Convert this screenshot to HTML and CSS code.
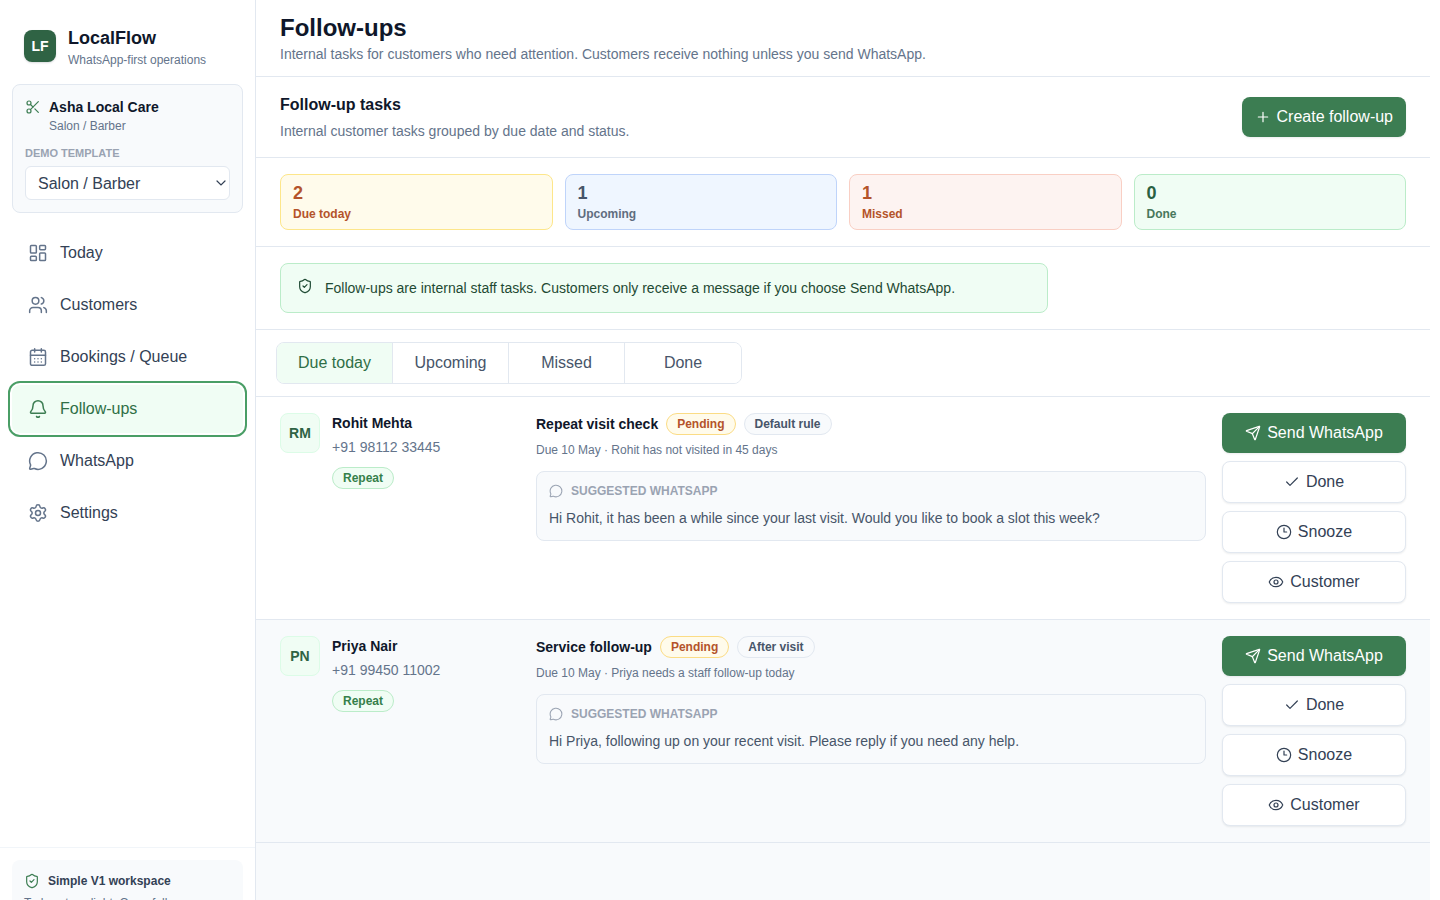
FILE: index.html
```html
<!DOCTYPE html>
<html lang="en">
<head>
  <meta charset="UTF-8">
  <title>LocalFlow - Follow-ups</title>
  <meta name="viewport" content="width=device-width, initial-scale=1.0">
  <link rel="stylesheet" href="styles.css">
</head>
<body>
  <svg class="sprite" aria-hidden="true">
    <symbol id="i-scissors" viewBox="0 0 24 24"><circle cx="6" cy="6" r="3"/><path d="M8.12 8.12 12 12"/><path d="M20 4 8.12 15.88"/><circle cx="6" cy="18" r="3"/><path d="M14.8 14.8 20 20"/></symbol>
    <symbol id="i-dashboard" viewBox="0 0 24 24"><rect width="7" height="9" x="3" y="3" rx="1"/><rect width="7" height="5" x="14" y="3" rx="1"/><rect width="7" height="9" x="14" y="12" rx="1"/><rect width="7" height="5" x="3" y="16" rx="1"/></symbol>
    <symbol id="i-users" viewBox="0 0 24 24"><path d="M16 21v-2a4 4 0 0 0-4-4H6a4 4 0 0 0-4 4v2"/><circle cx="9" cy="7" r="4"/><path d="M22 21v-2a4 4 0 0 0-3-3.87"/><path d="M16 3.13a4 4 0 0 1 0 7.75"/></symbol>
    <symbol id="i-calendar" viewBox="0 0 24 24"><path d="M8 2v4M16 2v4"/><rect width="18" height="18" x="3" y="4" rx="2"/><path d="M3 10h18M8 14h.01M12 14h.01M16 14h.01M8 18h.01M12 18h.01M16 18h.01"/></symbol>
    <symbol id="i-bell" viewBox="0 0 24 24"><path d="M10.268 21a2 2 0 0 0 3.464 0"/><path d="M3.262 15.326A1 1 0 0 0 4 17h16a1 1 0 0 0 .74-1.673C19.41 13.956 18 12.499 18 8A6 6 0 0 0 6 8c0 4.499-1.411 5.956-2.738 7.326"/></symbol>
    <symbol id="i-chat" viewBox="0 0 24 24"><path d="M2.992 16.342a2 2 0 0 1 .094 1.167l-1.065 3.29a1 1 0 0 0 1.236 1.168l3.413-.998a2 2 0 0 1 1.099.092 10 10 0 1 0-4.777-4.719"/></symbol>
    <symbol id="i-settings" viewBox="0 0 24 24"><path d="M9.671 4.136a2.34 2.34 0 0 1 4.659 0 2.34 2.34 0 0 0 3.319 1.915 2.34 2.34 0 0 1 2.33 4.033 2.34 2.34 0 0 0 0 3.831 2.34 2.34 0 0 1-2.33 4.033 2.34 2.34 0 0 0-3.319 1.915 2.34 2.34 0 0 1-4.659 0 2.34 2.34 0 0 0-3.32-1.915 2.34 2.34 0 0 1-2.33-4.033 2.34 2.34 0 0 0 0-3.831A2.34 2.34 0 0 1 6.35 6.051a2.34 2.34 0 0 0 3.319-1.915"/><circle cx="12" cy="12" r="3"/></symbol>
    <symbol id="i-shield" viewBox="0 0 24 24"><path d="M20 13c0 5-3.5 7.5-7.66 8.95a1 1 0 0 1-.67-.01C7.5 20.5 4 18 4 13V6a1 1 0 0 1 1-1c2 0 4.5-1.2 6.24-2.72a1.17 1.17 0 0 1 1.52 0C14.51 3.81 17 5 19 5a1 1 0 0 1 1 1z"/><path d="m9 12 2 2 4-4"/></symbol>
    <symbol id="i-plus" viewBox="0 0 24 24"><path d="M5 12h14M12 5v14"/></symbol>
    <symbol id="i-send" viewBox="0 0 24 24"><path d="M14.536 21.686a.5.5 0 0 0 .937-.024l6.5-19a.496.496 0 0 0-.635-.635l-19 6.5a.5.5 0 0 0-.024.937l7.93 3.18a2 2 0 0 1 1.112 1.11z"/><path d="m21.854 2.147-10.94 10.939"/></symbol>
    <symbol id="i-check" viewBox="0 0 24 24"><path d="M20 6 9 17l-5-5"/></symbol>
    <symbol id="i-clock" viewBox="0 0 24 24"><circle cx="12" cy="12" r="10"/><path d="M12 6v6h4"/></symbol>
    <symbol id="i-eye" viewBox="0 0 24 24"><path d="M2.062 12.348a1 1 0 0 1 0-.696 10.75 10.75 0 0 1 19.876 0 1 1 0 0 1 0 .696 10.75 10.75 0 0 1-19.876 0"/><circle cx="12" cy="12" r="3"/></symbol>
  </svg>

  <div class="app">
    <aside class="sidebar">
      <div class="brand">
        <div class="brand-mark">LF</div>
        <div>
          <div class="brand-name">LocalFlow</div>
          <div class="brand-sub">WhatsApp-first operations</div>
        </div>
      </div>

      <div class="business">
        <div class="business-head">
          <svg class="icon"><use href="#i-scissors"/></svg>
          <div>
            <div class="business-name">Asha Local Care</div>
            <div class="business-type">Salon / Barber</div>
          </div>
        </div>
        <label class="field-label" for="template">Demo template</label>
        <select class="field-select" id="template">
          <option>Salon / Barber</option>
        </select>
      </div>

      <nav class="nav">
        <a class="nav-item" href="#today"><svg class="icon"><use href="#i-dashboard"/></svg>Today</a>
        <a class="nav-item" href="#customers"><svg class="icon"><use href="#i-users"/></svg>Customers</a>
        <a class="nav-item" href="#bookings"><svg class="icon"><use href="#i-calendar"/></svg>Bookings / Queue</a>
        <a class="nav-item active" href="#follow-ups" aria-current="page"><svg class="icon"><use href="#i-bell"/></svg>Follow-ups</a>
        <a class="nav-item" href="#whatsapp"><svg class="icon"><use href="#i-chat"/></svg>WhatsApp</a>
        <a class="nav-item" href="#settings"><svg class="icon"><use href="#i-settings"/></svg>Settings</a>
      </nav>

      <div class="sidebar-foot">
        <div class="workspace">
          <div class="workspace-title"><svg class="icon"><use href="#i-shield"/></svg>Simple V1 workspace</div>
          <p class="workspace-text">Today stays light. Open full workspaces only when needed.</p>
        </div>
      </div>
    </aside>

    <main class="main">
      <header class="page-head">
        <h1>Follow-ups</h1>
        <p>Internal tasks for customers who need attention. Customers receive nothing unless you send WhatsApp.</p>
      </header>

      <section class="band toolbar">
        <div>
          <h2>Follow-up tasks</h2>
          <p>Internal customer tasks grouped by due date and status.</p>
        </div>
        <button class="btn btn-primary" type="button"><svg class="icon"><use href="#i-plus"/></svg>Create follow-up</button>
      </section>

      <section class="band stats">
        <div class="stat stat-today"><strong>2</strong><span>Due today</span></div>
        <div class="stat stat-upcoming"><strong>1</strong><span>Upcoming</span></div>
        <div class="stat stat-missed"><strong>1</strong><span>Missed</span></div>
        <div class="stat stat-done"><strong>0</strong><span>Done</span></div>
      </section>

      <section class="band">
        <div class="notice">
          <svg class="icon"><use href="#i-shield"/></svg>
          <p>Follow-ups are internal staff tasks. Customers only receive a message if you choose Send WhatsApp.</p>
        </div>
      </section>

      <section class="band tab-band">
        <div class="tabs">
          <button class="tab active" type="button">Due today</button>
          <button class="tab" type="button">Upcoming</button>
          <button class="tab" type="button">Missed</button>
          <button class="tab" type="button">Done</button>
        </div>
      </section>

      <article class="band task">
        <div class="person">
          <div class="avatar">RM</div>
          <div>
            <h3>Rohit Mehta</h3>
            <p class="phone">+91 98112 33445</p>
            <span class="badge badge-green">Repeat</span>
          </div>
        </div>
        <div class="detail">
          <div class="detail-head">
            <h3>Repeat visit check</h3>
            <span class="badge badge-amber">Pending</span>
            <span class="badge">Default rule</span>
          </div>
          <p class="due">Due 10 May · Rohit has not visited in 45 days</p>
          <div class="suggest">
            <div class="suggest-label"><svg class="icon"><use href="#i-chat"/></svg>Suggested WhatsApp</div>
            <p>Hi Rohit, it has been a while since your last visit. Would you like to book a slot this week?</p>
          </div>
        </div>
        <div class="actions">
          <button class="btn btn-primary" type="button"><svg class="icon"><use href="#i-send"/></svg>Send WhatsApp</button>
          <button class="btn btn-plain" type="button"><svg class="icon"><use href="#i-check"/></svg>Done</button>
          <button class="btn btn-plain" type="button"><svg class="icon"><use href="#i-clock"/></svg>Snooze</button>
          <button class="btn btn-plain" type="button"><svg class="icon"><use href="#i-eye"/></svg>Customer</button>
        </div>
      </article>

      <article class="band task task-alt">
        <div class="person">
          <div class="avatar">PN</div>
          <div>
            <h3>Priya Nair</h3>
            <p class="phone">+91 99450 11002</p>
            <span class="badge badge-green">Repeat</span>
          </div>
        </div>
        <div class="detail">
          <div class="detail-head">
            <h3>Service follow-up</h3>
            <span class="badge badge-amber">Pending</span>
            <span class="badge">After visit</span>
          </div>
          <p class="due">Due 10 May · Priya needs a staff follow-up today</p>
          <div class="suggest">
            <div class="suggest-label"><svg class="icon"><use href="#i-chat"/></svg>Suggested WhatsApp</div>
            <p>Hi Priya, following up on your recent visit. Please reply if you need any help.</p>
          </div>
        </div>
        <div class="actions">
          <button class="btn btn-primary" type="button"><svg class="icon"><use href="#i-send"/></svg>Send WhatsApp</button>
          <button class="btn btn-plain" type="button"><svg class="icon"><use href="#i-check"/></svg>Done</button>
          <button class="btn btn-plain" type="button"><svg class="icon"><use href="#i-clock"/></svg>Snooze</button>
          <button class="btn btn-plain" type="button"><svg class="icon"><use href="#i-eye"/></svg>Customer</button>
        </div>
      </article>
    </main>
  </div>
</body>
</html>
```
FILE: styles.css
```css
* {
  box-sizing: border-box;
}

body {
  margin: 0;
  background: #fff;
  color: #0f172a;
  font-family: "Liberation Sans", Helvetica, Arial, sans-serif;
  font-size: 16px;
}

h1, h2, h3, p {
  margin: 0;
}

button, select {
  font: inherit;
}

.sprite {
  display: none;
}

.icon {
  width: 16px;
  height: 16px;
  flex: none;
  fill: none;
  stroke: currentColor;
  stroke-width: 1.8;
  stroke-linecap: round;
  stroke-linejoin: round;
}

.app {
  display: flex;
  height: 100vh;
  overflow: hidden;
}

/* Sidebar */
.sidebar {
  display: flex;
  flex-direction: column;
  flex: none;
  width: 256px;
  height: calc(100vh + 54px);
  border-right: 1px solid #e2e8f0;
}

.brand {
  display: flex;
  align-items: center;
  gap: 12px;
  padding: 24px 24px 16px;
}

.brand-mark {
  width: 32px;
  border-radius: 8px;
  background: #2f6344;
  color: #fff;
  font-size: 14px;
  font-weight: bold;
  line-height: 32px;
  text-align: center;
  box-shadow: 0 1px 2px rgba(15, 23, 42, 0.15);
}

.brand-name {
  font-size: 18px;
  font-weight: bold;
  line-height: 28px;
}

.brand-sub {
  color: #64748b;
  font-size: 12px;
  line-height: 16px;
}

.business {
  margin: 0 12px;
  padding: 12px;
  border: 1px solid #e2e8f0;
  border-radius: 8px;
  background: #f8fafc;
}

.business-head {
  display: flex;
  gap: 8px;
  margin-bottom: 10px;
}

.business-head .icon {
  margin-top: 2px;
  color: #3c7d52;
}

.business-name {
  font-size: 14px;
  font-weight: bold;
  line-height: 20px;
}

.business-type {
  color: #64748b;
  font-size: 12px;
  line-height: 18px;
}

.field-label {
  display: block;
  margin-bottom: 5px;
  color: #9aa3b2;
  font-size: 11px;
  font-weight: bold;
  line-height: 16px;
  text-transform: uppercase;
}

.field-select {
  display: block;
  appearance: none;
  width: 100%;
  height: 34px;
  padding: 0 16px 0 12px;
  border: 1px solid #e2e8f0;
  border-radius: 6px;
  background: #fff url("data:image/svg+xml,%3Csvg xmlns='http://www.w3.org/2000/svg' width='10' height='6' fill='none' stroke='%23334155' stroke-width='1.2' stroke-linecap='round'%3E%3Cpath d='M1 1l4 4 4-4'/%3E%3C/svg%3E") no-repeat right 3px center;
  color: #334155;
}

.nav {
  display: grid;
  gap: 4px;
  padding: 16px 12px;
}

.nav-item {
  display: flex;
  align-items: center;
  gap: 12px;
  height: 48px;
  padding: 0 16px;
  border-radius: 8px;
  color: #334155;
  text-decoration: none;
}

.nav-item .icon {
  width: 20px;
  height: 20px;
  color: #64748b;
}

.nav-item.active {
  background: #f0fdf4;
  color: #2f6f46;
  outline: 2px solid #4a9e66;
  outline-offset: 2px;
}

.nav-item.active .icon {
  color: #3c7d52;
}

.sidebar-foot {
  margin-top: auto;
  padding: 12px;
  border-top: 1px solid #f1f5f9;
}

.workspace {
  padding: 12px;
  border-radius: 8px;
  background: #f8fafc;
}

.workspace-title {
  display: flex;
  align-items: center;
  gap: 8px;
  color: #334155;
  font-size: 12px;
  font-weight: bold;
  line-height: 18px;
}

.workspace-title .icon {
  color: #3c7d52;
}

.workspace-text {
  margin-top: 4px;
  color: #64748b;
  font-size: 12px;
  line-height: 18px;
}

/* Main column */
.main {
  flex: 1;
  min-width: 0;
  margin-right: 10px;
  background: #f8fafc;
}

.page-head,
.band {
  border-bottom: 1px solid #e2e8f0;
  background: #fff;
}

.page-head {
  padding: 12px 24px;
}

.band {
  padding: 16px 24px;
}

h1 {
  font-size: 24px;
  line-height: 32px;
}

h2 {
  font-size: 16px;
  line-height: 24px;
}

h3 {
  font-size: 14px;
  line-height: 20px;
}

.page-head p,
.toolbar p {
  color: #64748b;
  font-size: 14px;
  line-height: 20px;
}

.toolbar {
  display: flex;
  align-items: center;
  justify-content: space-between;
}

.toolbar p {
  margin-top: 4px;
}

.btn {
  display: flex;
  align-items: center;
  justify-content: center;
  gap: 6px;
  padding: 0 13px;
  border-radius: 8px;
  line-height: 40px;
  box-shadow: 0 1px 2px rgba(15, 23, 42, 0.08);
}

.btn-primary {
  border: 0;
  background: #3c7d52;
  color: #fff;
}

.btn-plain {
  border: 1px solid #e2e8f0;
  background: #fff;
  color: #334155;
}

.stats {
  display: grid;
  grid-template-columns: repeat(4, 1fr);
  gap: 12px;
}

.stat {
  display: grid;
  gap: 3px;
  padding: 8px 12px 7px;
  border: 1px solid;
  border-radius: 8px;
}

.stat strong {
  font-size: 18px;
  line-height: 20px;
}

.stat span {
  font-size: 12px;
  font-weight: bold;
  line-height: 16px;
  opacity: 0.85;
}

.stat-today {
  border-color: #fde68a;
  background: #fffbeb;
  color: #b4532a;
}

.stat-today span,
.stat-missed span {
  opacity: 1;
}

.stat-upcoming {
  border-color: #bfd4fa;
  background: #eff6ff;
  color: #475569;
}

.stat-missed {
  border-color: #f9cfc4;
  background: #fdf3f1;
  color: #b4532a;
}

.stat-done {
  border-color: #bbecc9;
  background: #f0fdf4;
  color: #2a6142;
}

.notice {
  display: flex;
  gap: 12px;
  max-width: 768px;
  padding: 12px 16px;
  border: 1px solid #bbecc9;
  border-radius: 8px;
  background: #f0fdf4;
  color: #1f4a33;
  font-size: 14px;
  line-height: 24px;
}

.notice .icon {
  margin-top: 2px;
}

.tab-band {
  padding: 12px 20px;
}

.tabs {
  display: inline-grid;
  grid-template-columns: repeat(4, 116px);
  border: 1px solid #e2e8f0;
  border-radius: 8px;
  overflow: hidden;
  vertical-align: top;
}

.tab {
  padding: 0;
  border: 0;
  border-right: 1px solid #e2e8f0;
  background: #fff;
  color: #475569;
  line-height: 40px;
}

.tab:last-child {
  border-right: 0;
}

.tab.active {
  background: #f0fdf4;
  color: #2f6f46;
}

/* Task rows */
.task {
  display: grid;
  grid-template-columns: 240px 1fr 184px;
  gap: 16px;
}

.task-alt {
  background: #f8fafc;
}

.person {
  display: flex;
  align-items: flex-start;
  gap: 12px;
}

.avatar {
  width: 40px;
  border: 1px solid #dcfce7;
  border-radius: 8px;
  background: #f0fdf4;
  color: #2f6344;
  font-size: 14px;
  font-weight: bold;
  line-height: 38px;
  text-align: center;
}

.phone {
  margin: 4px 0 10px;
  color: #64748b;
  font-size: 14px;
  line-height: 20px;
}

.badge {
  display: block;
  width: fit-content;
  padding: 0 10px;
  border: 1px solid #e2e8f0;
  border-radius: 11px;
  background: #f8fafc;
  color: #475569;
  font-size: 12px;
  font-weight: bold;
  line-height: 20px;
}

.badge-green {
  border-color: #bbecc9;
  background: #f0fdf4;
  color: #35804a;
}

.badge-amber {
  border-color: #fbdc85;
  background: #fffbeb;
  color: #b4532a;
}

.detail-head {
  display: flex;
  align-items: center;
  gap: 8px;
}

.due {
  margin-top: 6px;
  color: #64748b;
  font-size: 12px;
  line-height: 18px;
}

.suggest {
  margin-top: 12px;
  padding: 10px 12px;
  border: 1px solid #e2e8f0;
  border-radius: 8px;
  background: #f8fafc;
}

.suggest-label {
  display: flex;
  align-items: center;
  gap: 8px;
  margin-bottom: 6px;
  color: #9aa3b2;
  font-size: 12px;
  font-weight: bold;
  line-height: 18px;
  text-transform: uppercase;
}

.suggest-label .icon {
  width: 14px;
  height: 14px;
}

.suggest p {
  color: #475569;
  font-size: 14px;
  line-height: 24px;
}

.actions {
  display: grid;
  gap: 8px;
}
```
